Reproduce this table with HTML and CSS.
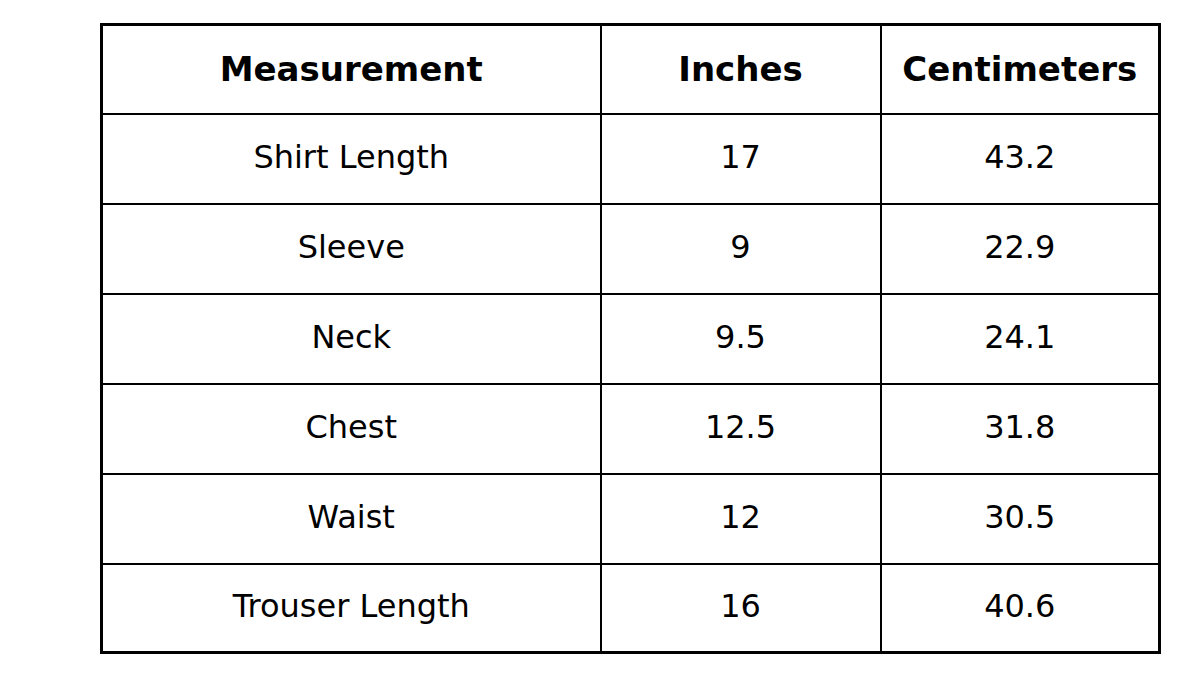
FILE: index.html
```html
<!DOCTYPE html>
<html>
<head>
<meta charset="utf-8">
<link rel="stylesheet" href="styles.css">
</head>
<body>
<div class="page">
<table class="size-table">
<colgroup><col class="c1"><col class="c2"><col class="c3"></colgroup>
<thead>
<tr><th>Measurement</th><th>Inches</th><th>Centimeters</th></tr>
</thead>
<tbody>
<tr><td>Shirt Length</td><td>17</td><td>43.2</td></tr>
<tr><td>Sleeve</td><td>9</td><td>22.9</td></tr>
<tr><td>Neck</td><td>9.5</td><td>24.1</td></tr>
<tr><td>Chest</td><td>12.5</td><td>31.8</td></tr>
<tr><td>Waist</td><td>12</td><td>30.5</td></tr>
<tr class="last"><td>Trouser Length</td><td>16</td><td>40.6</td></tr>
</tbody>
</table>
</div>
</body>
</html>
```
FILE: styles.css
```css
html, body {
  margin: 0;
  padding: 0;
  background: #ffffff;
}
.page {
  width: 1200px;
  height: 680px;
  padding: 23px 0 0 100px;
  box-sizing: border-box;
  font-family: "DejaVu Sans", "Liberation Sans", sans-serif;
  color: #000;
}
.size-table {
  border-collapse: collapse;
  border: 3px solid #000;
  table-layout: fixed;
  width: 1058px;
}
.c1 { width: 499px; }
.c2 { width: 280px; }
.c3 { width: 279px; }
.size-table th,
.size-table td {
  border: 2px solid #000;
  height: 90px;
  padding: 0;
  text-align: center;
  vertical-align: middle;
  box-sizing: border-box;
}
.size-table th {
  height: 89px;
  font-size: 34px;
  font-weight: bold;
}
.size-table td {
  font-size: 32px;
  font-weight: normal;
  padding-bottom: 3px;
}
.size-table tr.last td {
  height: 89px;
}
```
